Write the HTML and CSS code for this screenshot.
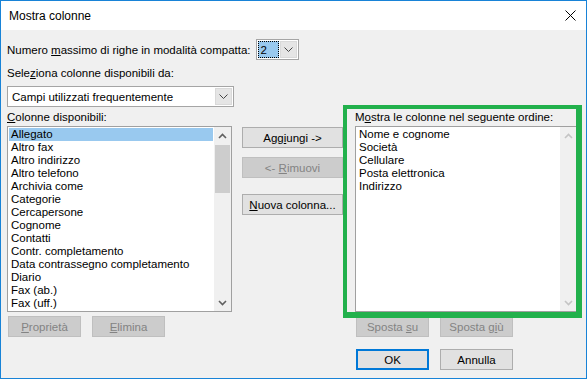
FILE: index.html
```html
<!DOCTYPE html>
<html lang="it">
<head>
  <meta charset="UTF-8" />
  <title>Mostra colonne</title>
  <link rel="stylesheet" href="styles.css">
</head>
<body>
  <div class="window">
    <div class="titlebar">
      <span class="title">Mostra colonne</span>
      <svg class="close" width="11" height="11" viewBox="0 0 11 11">
        <path d="M0.5 0.5L10.5 10.5M10.5 0.5L0.5 10.5" stroke="#000" stroke-width="1" fill="none"/>
      </svg>
    </div>

    <div class="content">
      <div class="row-compact">
        <span>Numero <u>m</u>assimo di righe in modalità compatta:</span>
        <div class="combo combo-small">
          <span class="combo-value focused">2</span>
          <span class="combo-btn">
            <svg width="9" height="5" viewBox="0 0 9 5"><path d="M0.5 0.5L4.5 4.5L8.5 0.5" stroke="#444" fill="none"/></svg>
          </span>
        </div>
      </div>

      <div class="label-source">Sele<u>z</u>iona colonne disponibili da:</div>

      <div class="main">
        <div class="combo combo-wide">
          <span class="combo-value">Campi utilizzati frequentemente</span>
          <span class="combo-btn">
            <svg width="9" height="5" viewBox="0 0 9 5"><path d="M0.5 0.5L4.5 4.5L8.5 0.5" stroke="#444" fill="none"/></svg>
          </span>
        </div>

        <div class="col-label left-label"><u>C</u>olonne disponibili:</div>
        <div class="col-label right-label">M<u>o</u>stra le colonne nel seguente ordine:</div>

        <div class="listbox list-left">
          <ul class="items">
            <li class="selected">Allegato</li>
            <li>Altro fax</li>
            <li>Altro indirizzo</li>
            <li>Altro telefono</li>
            <li>Archivia come</li>
            <li>Categorie</li>
            <li>Cercapersone</li>
            <li>Cognome</li>
            <li>Contatti</li>
            <li>Contr. completamento</li>
            <li>Data contrassegno completamento</li>
            <li>Diario</li>
            <li>Fax (ab.)</li>
            <li>Fax (uff.)</li>
          </ul>
          <div class="scrollbar">
            <span class="arrow">
              <svg width="9" height="6" viewBox="0 0 9 6"><path d="M1 5L4.5 1.5L8 5" stroke="#606060" stroke-width="1.6" fill="none"/></svg>
            </span>
            <span class="thumb"></span>
            <span class="track"></span>
            <span class="arrow">
              <svg width="9" height="6" viewBox="0 0 9 6"><path d="M1 1L4.5 4.5L8 1" stroke="#606060" stroke-width="1.6" fill="none"/></svg>
            </span>
          </div>
        </div>

        <div class="mid-buttons">
          <button type="button" class="btn">Agg<u>i</u>ungi -&gt;</button>
          <button type="button" class="btn disabled">&lt;- <u>R</u>imuovi</button>
          <button type="button" class="btn new-col"><u>N</u>uova colonna...</button>
        </div>

        <div class="listbox list-right">
          <ul class="items">
            <li>Nome e cognome</li>
            <li>Società</li>
            <li>Cellulare</li>
            <li>Posta elettronica</li>
            <li>Indirizzo</li>
          </ul>
          <div class="scrollbar off">
            <span class="arrow">
              <svg width="9" height="6" viewBox="0 0 9 6"><path d="M1 5L4.5 1.5L8 5" stroke="#c4c4c4" stroke-width="1.6" fill="none"/></svg>
            </span>
            <span class="track"></span>
            <span class="arrow">
              <svg width="9" height="6" viewBox="0 0 9 6"><path d="M1 1L4.5 4.5L8 1" stroke="#c4c4c4" stroke-width="1.6" fill="none"/></svg>
            </span>
          </div>
        </div>

        <div class="btn-row left-buttons">
          <button type="button" class="btn small disabled"><u>P</u>roprietà</button>
          <button type="button" class="btn small disabled"><u>E</u>limina</button>
        </div>

        <div class="btn-row move-buttons">
          <button type="button" class="btn small disabled">Sposta <u>s</u>u</button>
          <button type="button" class="btn small disabled">Sposta g<u>i</u>ù</button>
        </div>

        <div class="btn-row dialog-buttons">
          <button type="button" class="btn small default">OK</button>
          <button type="button" class="btn small">Annulla</button>
        </div>
      </div>
    </div>

    <div class="highlight"></div>
  </div>
</body>
</html>
```

FILE: styles.css
```css
body {
  margin: 0;
  font-family: "Liberation Sans", Arial, sans-serif;
  font-size: 11.5px;
  color: #000;
  background: #fff;
}
.window {
  position: relative;
  box-sizing: border-box;
  width: 587px;
  height: 379px;
  border: 1px solid #1883d7;
  background: #f0f0f0;
}
.titlebar {
  display: flex;
  align-items: center;
  height: 29px;
  padding: 0 10px 0 8px;
  background: #fff;
}
.title {
  font-size: 12px;
}
.close {
  margin-left: auto;
}
.content {
  padding: 9px 0 0 6px;
}
.row-compact {
  display: flex;
  align-items: center;
  gap: 5px;
  height: 21px;
}
.label-source {
  margin-top: 5px;
  line-height: 16px;
  height: 21px;
}

/* combobox */
.combo {
  box-sizing: border-box;
  display: flex;
  align-items: stretch;
  height: 21px;
  padding: 1px;
  border: 1px solid #a5a5a5;
  background: #fff;
}
.combo-small {
  width: 43px;
}
.combo-wide {
  width: 227px;
  grid-column: 1;
  grid-row: 1;
}
.combo-value {
  flex: 1;
  display: flex;
  align-items: center;
  padding-left: 3px;
}
.combo-value.focused {
  box-sizing: border-box;
  padding-left: 2px;
  margin-right: 1px;
  background: #99c9ef;
  border: 1px dotted #000;
}
.combo-btn {
  box-sizing: border-box;
  width: 17px;
  display: flex;
  align-items: center;
  justify-content: center;
  background: #e5e5e5;
  border: 1px solid #d9d9d9;
}

/* main area */
.main {
  display: grid;
  grid-template-columns: 226px 122px 223px;
  grid-template-rows: 21px 19px 186px 25px 33px;
}
.col-label {
  grid-row: 2;
  line-height: 16px;
  padding-top: 2px;
}
.left-label {
  grid-column: 1;
}
.right-label {
  grid-column: 3;
}
.listbox {
  box-sizing: border-box;
  grid-row: 3;
  display: flex;
  border: 1px solid #a0a0a0;
  background: #fff;
}
.list-left {
  grid-column: 1;
  width: 225px;
}
.list-right {
  grid-column: 3;
}
.items {
  flex: 1;
  list-style: none;
  margin: 0;
  padding: 1px 1px 0;
}
.items li {
  height: 13px;
  line-height: 13px;
  padding-left: 2px;
  white-space: nowrap;
}
.items li.selected {
  background: #99c9ef;
}
.scrollbar {
  display: flex;
  flex-direction: column;
  width: 17px;
  background: #f0f0f0;
}
.scrollbar .arrow {
  height: 17px;
  display: flex;
  align-items: center;
  justify-content: center;
}
.scrollbar .thumb {
  height: 48px;
  margin: 1px 1px 0;
  background: #cdcdcd;
}
.scrollbar .track {
  flex: 1;
}

/* buttons */
.mid-buttons {
  grid-column: 2;
  grid-row: 3;
  display: flex;
  flex-direction: column;
  gap: 9px;
  padding: 1px 0 0 9px;
}
.btn {
  box-sizing: border-box;
  width: 101px;
  height: 21px;
  padding: 0;
  border: 1px solid #adadad;
  background: #e1e1e1;
  font-family: inherit;
  font-size: inherit;
  color: #000;
}
.btn.new-col {
  margin-top: 7px;
}
.btn.small {
  width: 73px;
}
.btn.disabled {
  background: #cccccc;
  border-color: #bfbfbf;
  color: #838383;
}
.btn.default {
  border: 2px solid #0078d7;
}
.btn-row {
  display: flex;
  gap: 11px;
  align-items: flex-end;
}
.left-buttons {
  grid-column: 1;
  grid-row: 4;
  padding-left: 1px;
}
.move-buttons {
  grid-column: 3;
  grid-row: 4;
  padding-left: 1px;
}
.dialog-buttons {
  grid-column: 3;
  grid-row: 5;
  padding-left: 1px;
}

/* green annotation frame drawn over the dialog */
.highlight {
  position: absolute;
  left: 342px;
  top: 104px;
  box-sizing: border-box;
  width: 239px;
  height: 213px;
  border: solid #22b14c;
  border-width: 4px 6px 6px 4px;
}
```
